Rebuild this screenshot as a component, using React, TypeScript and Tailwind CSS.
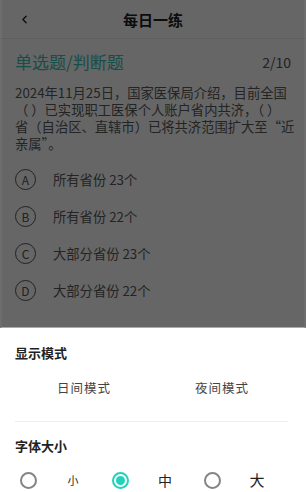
import React from 'react';
import { ChevronLeft } from 'lucide-react';

const font = { fontFamily: '"Noto Sans CJK SC", "Noto Sans", sans-serif' };

const options = [
  { key: 'A', text: '所有省份 23个' },
  { key: 'B', text: '所有省份 22个' },
  { key: 'C', text: '大部分省份 23个' },
  { key: 'D', text: '大部分省份 22个' },
];

const sizes = [
  { label: '小', cls: 'text-[11px]', checked: false },
  { label: '中', cls: 'text-[14px]', checked: true },
  { label: '大', cls: 'text-[15px]', checked: false },
];

export default function App() {
  return (
    <div className="relative w-[306px] h-[492px] overflow-hidden bg-white" style={font}>
      {/* page under the sheet */}
      <div className="h-[39px] flex items-center relative border-b border-[#ececec]">
        <ChevronLeft className="absolute left-[18px] text-[#222]" size={13} strokeWidth={2.5} />
        <div className="w-full text-center text-[15px] font-bold text-[#222] leading-none">每日一练</div>
      </div>

      <div className="px-[15px]">
        <div className="flex items-center justify-between h-[44px] mt-[1px]">
          <span className="text-[17px] text-[#3cc4b6]">单选题/判断题</span>
          <span className="text-[14px] text-[#555]">2/10</span>
        </div>

        <p className="text-[13.3px] leading-[17px] text-[#5a5a5a] whitespace-nowrap">
          2024年11月25日，国家医保局介绍，目前全国<br />
          （ ）已实现职工医保个人账户省内共济，（ ）<br />
          省（自治区、直辖市）已将共济范围扩大至“近<br />
          亲属”。
        </p>

        <div className="mt-[17px] flex flex-col gap-[16px]">
          {options.map((o) => (
            <div key={o.key} className="flex items-center h-[21px]">
              <div className="w-[21px] h-[21px] rounded-full border border-[#555] flex items-center justify-center text-[12px] text-[#555]">
                {o.key}
              </div>
              <span className="ml-[17px] text-[13.3px] text-[#5a5a5a]">{o.text}</span>
            </div>
          ))}
        </div>
      </div>

      {/* dim overlay */}
      <div className="absolute inset-x-0 top-0 h-[328px] bg-black/60 border-x-2 border-[#777]/40 border-b border-b-[#aaa]" />

      {/* bottom sheet */}
      <div className="absolute left-0 right-0 bottom-0 h-[164px] bg-white px-[15px]">
        <div className="pt-[17px] text-[13px] font-bold text-[#222] leading-[16px]">显示模式</div>
        <div className="grid grid-cols-2 mt-[19px] text-[12.5px] text-[#444] tracking-[1px] leading-[16px]">
          <div className="text-center">日间模式</div>
          <div className="text-center">夜间模式</div>
        </div>
        <div className="mt-[25px] mr-[3px] border-t border-[#eeeeee]" />
        <div className="mt-[16px] text-[13px] font-bold text-[#222] leading-[16px]">字体大小</div>
        <div className="flex mt-[15px] items-center">
          {sizes.map((s) => (
            <div key={s.label} className="w-[92px] flex items-center">
              {s.checked ? (
                <div className="ml-[5px] w-[17px] h-[17px] rounded-full border-[2px] border-[#1fd3bc] flex items-center justify-center">
                  <div className="w-[9px] h-[9px] rounded-full bg-[#1fd3bc]" />
                </div>
              ) : (
                <div className="ml-[5px] w-[17px] h-[17px] rounded-full border-[2px] border-[#858585]" />
              )}
              <div className={`ml-[21px] w-[30px] text-center text-[#222] ${s.cls}`}>{s.label}</div>
            </div>
          ))}
        </div>
      </div>
    </div>
  );
}
